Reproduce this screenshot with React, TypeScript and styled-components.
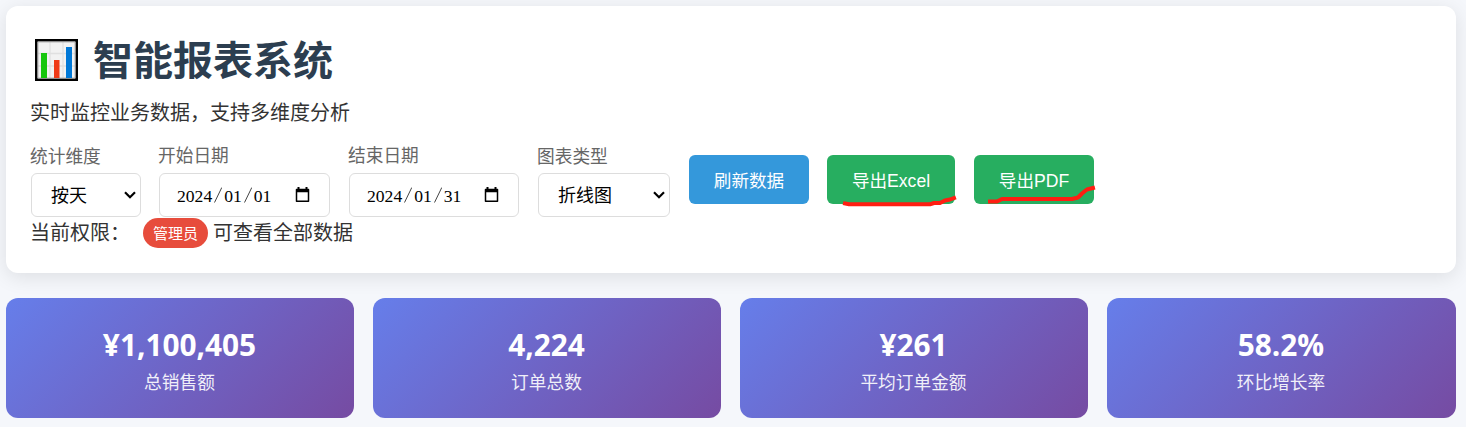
import React from "react";
import styled, { createGlobalStyle } from "styled-components";

const GlobalStyle = createGlobalStyle`
  * { box-sizing: border-box; }
  body {
    margin: 0;
    background: #f5f7fb;
    color: #333;
    font-family: "Open Sans", "Noto Sans CJK SC", sans-serif;
  }
  button { font-family: inherit; }
`;

const Page = styled.main`
  height: 427px;
  padding: 6px 10px 0 6px;
  overflow: hidden;
`;

const Panel = styled.header`
  height: 267px;
  padding: 24px;
  background: #fff;
  border-radius: 12px;
  box-shadow: 0 4px 20px rgba(0, 0, 0, 0.1);
`;

const Title = styled.h1`
  display: flex;
  align-items: center;
  height: 60px;
  margin: 0;
  color: #2c3e50;
  font-size: 40px;
  line-height: 60px;
  font-weight: 700;
`;

const TitleIcon = styled.svg`
  width: 43px;
  height: 42px;
  margin: 0 15px 0 5px;
`;

const Subtitle = styled.p`
  height: 30px;
  margin: 7px 0 0;
  font-size: 20px;
  line-height: 30px;
  font-weight: 400;
  font-family: "Noto Sans CJK SC", sans-serif;
`;

const Toolbar = styled.div`
  display: flex;
  align-items: flex-start;
  height: 75px;
  margin-top: 15px;
  padding-left: 1px;
`;

const Field = styled.label<{ $width: number; $gap: number }>`
  display: flex;
  flex-direction: column;
  width: ${(p) => p.$width}px;
  margin-right: ${(p) => p.$gap}px;
`;

const FieldLabel = styled.span<{ $drop?: boolean }>`
  height: 31px;
  padding-top: ${(p) => (p.$drop ? 1 : 0)}px;
  margin-left: -1px;
  color: #666;
  font-size: 17.7px;
  line-height: 24px;
  font-weight: 400;
  white-space: nowrap;
  font-family: "Noto Sans CJK SC", sans-serif;
`;

const Control = styled.div<{ $date?: boolean }>`
  display: flex;
  align-items: center;
  justify-content: space-between;
  height: 44px;
  padding: ${(p) => (p.$date ? "0 19px 0 17px" : "0 4px 0 19px")};
  border: 1px solid #ddd;
  border-radius: 6px;
  background: #fff;
  color: #000;
  font-size: 18px;
  line-height: 26px;
`;

const DateText = styled.span`
  display: flex;
  gap: 2px;
  padding-top: 2px;
  font-family: "Liberation Serif", serif;
  font-size: 17.6px;
`;

const Slash = styled.svg`
  width: 8px;
  height: 26px;
`;

const Actions = styled.div`
  display: flex;
  padding-top: 13px;
`;

const Button = styled.button<{ $color: string; $width: number; $gap: number }>`
  position: relative;
  width: ${(p) => p.$width}px;
  height: 49px;
  margin-right: ${(p) => p.$gap}px;
  padding: 2px 0 0;
  border: 0;
  border-radius: 6px;
  background: ${(p) => p.$color};
  color: #fff;
  font-family: "Liberation Sans", "Noto Sans CJK SC", sans-serif;
  font-size: 17.6px;
  line-height: 26px;
  white-space: nowrap;
`;

const Marker = styled.svg`
  position: absolute;
  left: 0;
  top: 0;
  width: 124px;
  height: 54px;
  overflow: visible;
`;

const Permission = styled.div`
  display: flex;
  align-items: center;
  height: 30px;
  font-size: 20px;
  line-height: 28px;
  font-weight: 400;
  font-family: "Noto Sans CJK SC", sans-serif;
  margin-top: 1px;
`;

const PermissionText = styled.span`
  height: 30px;
`;

const Badge = styled.span`
  width: 65px;
  height: 30px;
  margin: 0 5px 0 13px;
  border-radius: 15px;
  background: #e74c3c;
  color: #fff;
  font-size: 15px;
  font-weight: 400;
  line-height: 30px;
  text-align: center;
`;

const Stats = styled.section`
  display: grid;
  grid-template-columns: repeat(3, 348px) 349px;
  gap: 19px;
  margin-top: 25px;
`;

const StatCard = styled.article`
  height: 120px;
  padding: 25px 1px 0 0;
  border-radius: 12px;
  background: linear-gradient(135deg, #667eea 0%, #764ba2 100%);
  color: #fff;
  text-align: center;
`;

const StatValue = styled.div`
  height: 44px;
  font-size: 29.8px;
  line-height: 44px;
  font-weight: 700;
`;

const StatLabel = styled.div`
  font-family: "Noto Sans CJK SC", sans-serif;
  font-size: 17.7px;
  line-height: 28px;
  opacity: 0.9;
`;

const ChartIcon = () => (
  <TitleIcon viewBox="0 0 43 42" preserveAspectRatio="none">
    <rect width="43" height="42" fill="#000" />
    <rect x="2.5" y="2.5" width="38" height="37" fill="#f2f2f2" />
    <path d="M15 3v36M28 3v36M3 14.500h37M3 27h37" stroke="#e0e0e0" strokeWidth="1.3" />
    <path d="M3 39V3h37v36z" fill="none" stroke="#aaa" strokeWidth="0.8" />
    <rect x="6" y="14" width="6" height="25" fill="#16c60c" />
    <rect x="19" y="21" width="5.500" height="18" fill="#f03a17" />
    <rect x="31" y="8" width="6" height="31" fill="#0078d7" />
  </TitleIcon>
);

const Chevron = () => (
  <svg width="12" height="8" viewBox="0 0 12 8">
    <path d="M1 1.300 6 6.200 11 1.300" fill="none" stroke="#000" strokeWidth="2.200" />
  </svg>
);

const CalendarIcon = () => (
  <svg width="15" height="16" viewBox="0 0 15 16">
    <path d="M1.500 2.500h12v11.700h-12z" fill="none" stroke="#000" strokeWidth="1.500" strokeLinejoin="round" />
    <path d="M1 2h13v3.200H1zM2.500 0h2v3h-2zM10.500 0h2v3h-2z" fill="#000" />
  </svg>
);

const SelectField = ({ label, value, width, gap }: { label: string; value: string; width: number; gap: number }) => (
  <Field $width={width} $gap={gap}>
    <FieldLabel $drop>{label}</FieldLabel>
    <Control>
      <span>{value}</span>
      <Chevron />
    </Control>
  </Field>
);

const DateSlash = () => (
  <Slash viewBox="0 0 8 26">
    <path d="M7.800 4.500 .5 19.500" stroke="#444" strokeWidth="1" />
  </Slash>
);

const DateField = ({ label, value, width, gap }: { label: string; value: string[]; width: number; gap: number }) => (
  <Field $width={width} $gap={gap}>
    <FieldLabel>{label}</FieldLabel>
    <Control $date>
      <DateText>
        <span>{value[0]}</span>
        <DateSlash />
        <span>{value[1]}</span>
        <DateSlash />
        <span>{value[2]}</span>
      </DateText>
      <CalendarIcon />
    </Control>
  </Field>
);

const stats = [
  { value: "¥1,100,405", label: "总销售额" },
  { value: "4,224", label: "订单总数" },
  { value: "¥261", label: "平均订单金额" },
  { value: "58.2%", label: "环比增长率" },
];

export default function App() {
  return (
    <Page>
      <GlobalStyle />
      <Panel>
        <Title>
          <ChartIcon />
          智能报表系统
        </Title>
        <Subtitle>实时监控业务数据，支持多维度分析</Subtitle>
        <Toolbar>
          <SelectField label="统计维度" value="按天" width={110} gap={18} />
          <DateField label="开始日期" value={["2024", "01", "01"]} width={171} gap={19} />
          <DateField label="结束日期" value={["2024", "01", "31"]} width={170} gap={19} />
          <SelectField label="图表类型" value="折线图" width={132} gap={19} />
          <Actions>
            <Button $color="#3498db" $width={120} $gap={18}>刷新数据</Button>
            <Button $color="#27ae60" $width={128} $gap={19}>
              导出Excel
              <Marker viewBox="0 0 124 54">
                <path d="M18 48.500 22 49.300H103L107 48H113L118 45.500 123 44.500 127 43" fill="none" stroke="#ff1e12" strokeWidth="4" strokeLinecap="square" strokeLinejoin="round" />
              </Marker>
            </Button>
            <Button $color="#27ae60" $width={120} $gap={0}>
              导出PDF
              <Marker viewBox="0 0 124 54">
                <path d="M16 46.500H23L28 44H98L104 42.500 108 38.500 111 36 113 34.500 119 33" fill="none" stroke="#ff1e12" strokeWidth="4" strokeLinecap="square" strokeLinejoin="round" />
              </Marker>
            </Button>
          </Actions>
        </Toolbar>
        <Permission>
          <PermissionText>当前权限：</PermissionText>
          <Badge>管理员</Badge>
          <PermissionText>可查看全部数据</PermissionText>
        </Permission>
      </Panel>
      <Stats>
        {stats.map((s) => (
          <StatCard key={s.label}>
            <StatValue>{s.value}</StatValue>
            <StatLabel>{s.label}</StatLabel>
          </StatCard>
        ))}
      </Stats>
    </Page>
  );
}
